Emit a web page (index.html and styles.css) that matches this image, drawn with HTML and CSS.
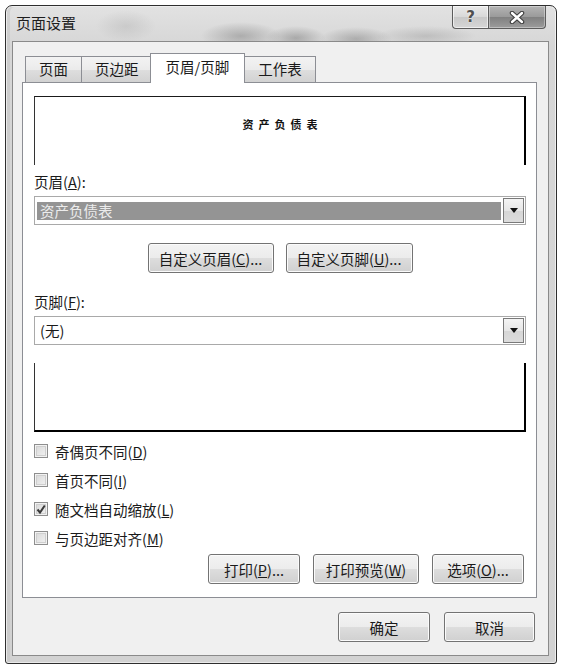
FILE: index.html
```html
<!DOCTYPE html>
<html lang="zh-CN">
<head>
<meta charset="utf-8">
<title>页面设置</title>
<link rel="stylesheet" href="styles.css">
</head>
<body>
<div class="window">
  <div class="titlebar">
    <span class="title">页面设置</span>
    <div class="caption">
      <div class="cbtn help"><span>?</span></div>
      <div class="cbtn close">
        <svg width="16" height="13" viewBox="0 0 16 13">
          <path d="M3 2 L13 11 M13 2 L3 11" stroke="#3c3c3c" stroke-width="4.5" stroke-linecap="round"/>
          <path d="M3 2 L13 11 M13 2 L3 11" stroke="#ffffff" stroke-width="2.4" stroke-linecap="round"/>
        </svg>
      </div>
    </div>
  </div>
  <div class="client">
    <div class="tabs">
      <div class="tab">页面</div>
      <div class="tab">页边距</div>
      <div class="tab active">页眉/页脚</div>
      <div class="tab">工作表</div>
    </div>
    <div class="panel">
      <div class="preview preview-top"><span class="preview-text">资产负债表</span></div>
      <div class="label">页眉(<u>A</u>):</div>
      <div class="combo">
        <div class="combo-value"><span class="sel">资产负债表</span></div>
        <div class="drop"><svg width="8" height="5" viewBox="0 0 8 5"><path d="M0 0 H8 L4 5 Z" fill="#111"/></svg></div>
      </div>
      <div class="btn-row center">
        <div class="btn w126">自定义页眉(<u>C</u>)...</div>
        <div class="btn w127">自定义页脚(<u>U</u>)...</div>
      </div>
      <div class="label label-gap">页脚(<u>F</u>):</div>
      <div class="combo">
        <div class="combo-value"><span class="plain">(无)</span></div>
        <div class="drop"><svg width="8" height="5" viewBox="0 0 8 5"><path d="M0 0 H8 L4 5 Z" fill="#111"/></svg></div>
      </div>
      <div class="preview preview-bottom"></div>
      <div class="checks">
        <div class="check"><span class="box"></span><span class="check-label">奇偶页不同(<u>D</u>)</span></div>
        <div class="check"><span class="box"></span><span class="check-label">首页不同(<u>I</u>)</span></div>
        <div class="check"><span class="box"><svg width="12" height="12" viewBox="0 0 12 12"><path d="M2.5 6.5 L5 9.5 L9.8 2.5" fill="none" stroke="#3a3a3a" stroke-width="2"/></svg></span><span class="check-label">随文档自动缩放(<u>L</u>)</span></div>
        <div class="check"><span class="box"></span><span class="check-label">与页边距对齐(<u>M</u>)</span></div>
      </div>
      <div class="btn-row right">
        <div class="btn w92">打印(<u>P</u>)...</div>
        <div class="btn w106">打印预览(<u>W</u>)</div>
        <div class="btn w92">选项(<u>O</u>)...</div>
      </div>
    </div>
    <div class="dialog-btns">
      <div class="btn w92">确定</div>
      <div class="btn w91">取消</div>
    </div>
  </div>
</div>
</body>
</html>
```
FILE: styles.css
```css
body {
  margin: 0;
  background: #ffffff;
  font-family: "Noto Sans CJK SC", "Noto Sans", sans-serif;
  color: #1a1a1a;
}

.window {
  box-sizing: border-box;
  width: 552px;
  height: 659px;
  margin: 5px 0 0 5px;
  border: 1px solid #2e2e2e;
  border-radius: 7px 7px 3px 3px;
  padding: 0 7px 7px 6px;
  display: flex;
  flex-direction: column;
  background:
    radial-gradient(ellipse 40px 14px at 235px 30px, rgba(90,90,90,.35), transparent),
    radial-gradient(ellipse 30px 12px at 290px 32px, rgba(80,80,80,.35), transparent),
    radial-gradient(ellipse 36px 12px at 350px 33px, rgba(70,70,70,.3), transparent),
    radial-gradient(ellipse 50px 10px at 420px 30px, rgba(110,110,110,.25), transparent),
    radial-gradient(ellipse 30px 16px at 120px 20px, rgba(150,150,150,.25), transparent),
    linear-gradient(to bottom, #e2e2e2 0, #d6d6d6 40px, #d2d2d2 100%);
  box-shadow: inset 0 0 0 1px rgba(255,255,255,.6), inset 3px 0 0 1px rgba(190,190,190,.4);
}

.titlebar {
  height: 36px;
  display: flex;
  justify-content: space-between;
  align-items: flex-start;
}

.title {
  font-size: 15px;
  line-height: 20px;
  margin: 7px 0 0 4px;
  color: #1e1e1e;
}

.caption {
  display: flex;
  margin-right: 3px;
}

.cbtn {
  box-sizing: border-box;
  height: 23px;
  border: 1px solid #5c5c5c;
  border-top: none;
  display: flex;
  align-items: center;
  justify-content: center;
}

.help {
  width: 36px;
  border-radius: 0 0 0 4px;
  border-right: none;
  background: linear-gradient(#eaeaea, #d8d8d8 50%, #c8c8c8 51%, #d6d6d6);
  box-shadow: inset 0 0 0 1px rgba(255,255,255,.6);
}

.help span {
  font-family: "DejaVu Sans", sans-serif;
  font-weight: bold;
  font-size: 15px;
  color: #505050;
  text-shadow: 0 0 2px #fff;
  margin-top: -1px;
}

.close {
  width: 58px;
  border-radius: 0 0 4px 0;
  background: linear-gradient(#b4b4b4, #9a9a9a 50%, #808080 51%, #9c9c9c);
  box-shadow: inset 0 0 0 1px rgba(255,255,255,.35);
}

.client {
  flex: 1;
  display: flex;
  flex-direction: column;
  border: 1px solid #8a8a8a;
  background: #f0f0f0;
  padding: 11px 11px 13px 9px;
}

.tabs {
  display: flex;
  align-items: flex-end;
  height: 29px;
  margin-left: 3px;
  position: relative;
  z-index: 1;
}

.tab {
  box-sizing: border-box;
  height: 26px;
  padding: 0 13px;
  border: 1px solid #8c8e94;
  border-bottom: none;
  margin-right: -1px;
  font-size: 14.5px;
  line-height: 24px;
  background: linear-gradient(#f3f3f3, #ebebeb 50%, #dedede 51%, #d2d2d2);
}

.tab.active {
  height: 30px;
  margin: 0 -1px -1px -2px;
  padding: 0 15px;
  line-height: 26px;
  background: #ffffff;
  position: relative;
  z-index: 2;
}

.panel {
  display: flex;
  flex-direction: column;
  background: #ffffff;
  border: 1px solid #8c8e94;
  padding: 0 10px 13px 11px;
}

.preview {
  box-sizing: border-box;
  height: 69px;
}

.preview-top {
  margin-top: 13px;
  border-top: 1px solid #1a1a1a;
  border-left: 1px solid #333;
  border-right: 2px solid #000;
  text-align: center;
  padding-top: 13px;
}

.preview-text {
  font-size: 11px;
  line-height: 14px;
  font-weight: bold;
  letter-spacing: 5px;
  color: #111;
  margin-left: 6px;
}

.preview-bottom {
  margin-top: 18px;
  border-left: 1px solid #333;
  border-right: 2px solid #000;
  border-bottom: 2px solid #000;
}

.label {
  margin-top: 9px;
  font-size: 14.5px;
  line-height: 16px;
}

.label-gap {
  margin-top: 21px;
}

.combo {
  box-sizing: border-box;
  margin-top: 6px;
  height: 29px;
  border: 1px solid #a9a9a9;
  display: flex;
  padding: 1px;
}

.combo-value {
  flex: 1;
  display: flex;
  align-items: center;
  padding: 0 1px;
}

.sel {
  flex: 1;
  background: #949494;
  color: #ececec;
  font-size: 14.5px;
  line-height: 18px;
  padding-left: 3px;
  margin-right: 1px;
}

.plain {
  font-size: 14.5px;
  line-height: 18px;
  padding-left: 3px;
}

.drop {
  box-sizing: border-box;
  width: 21px;
  border: 1px solid #7a7a7a;
  background: linear-gradient(#f4f4f4, #e6e6e6 50%, #d6d6d6 51%, #dcdcdc);
  display: flex;
  align-items: center;
  justify-content: center;
}

.btn-row {
  display: flex;
}

.btn-row.center {
  justify-content: center;
  gap: 12px;
  margin-top: 18px;
}

.btn-row.right {
  justify-content: flex-end;
  gap: 13px;
  margin-top: 6px;
  margin-right: 2px;
}

.btn {
  box-sizing: border-box;
  height: 30px;
  border: 1px solid #737373;
  border-radius: 3px;
  background: linear-gradient(#f3f3f3, #ececec 50%, #dddddd 51%, #d0d0d0);
  box-shadow: inset 0 0 0 1px #fbfbfb;
  font-size: 14.5px;
  display: flex;
  align-items: center;
  justify-content: center;
  white-space: nowrap;
}

.w126 { width: 126px; }
.w127 { width: 127px; }
.w92 { width: 92px; }
.w91 { width: 91px; }
.w106 { width: 106px; }

.checks {
  display: flex;
  flex-direction: column;
  gap: 9px;
  margin-top: 9px;
}

.check {
  display: flex;
  align-items: center;
  height: 20px;
  font-size: 14.5px;
  gap: 7px;
}

.check-label {
  white-space: nowrap;
}

.box {
  box-sizing: border-box;
  width: 14px;
  height: 14px;
  border: 1px solid #8e8e8e;
  background: linear-gradient(135deg, #d6d6d6, #f4f4f4);
  box-shadow: inset 0 0 0 1px #f2f2f2, inset 0 0 0 2px #cfcfcf;
  display: flex;
  align-items: center;
  justify-content: center;
}

.dialog-btns {
  display: flex;
  justify-content: flex-end;
  gap: 14px;
  margin-top: 14px;
  margin-right: 2px;
}
```
